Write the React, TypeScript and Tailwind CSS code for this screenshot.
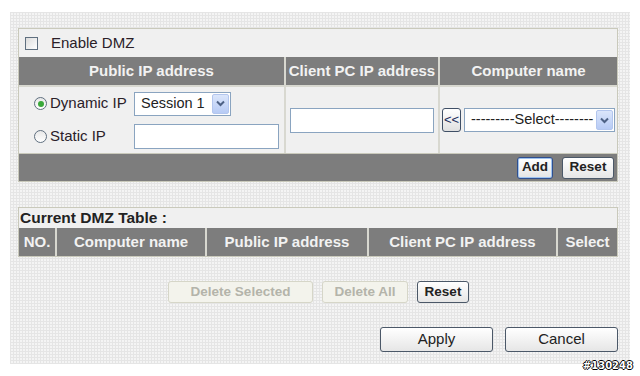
import React from "react"

const font = { fontFamily: '"Liberation Sans", Arial, sans-serif' }

function Radio({ checked }: { checked?: boolean }) {
  return (
    <span className="w-[13px] h-[13px] rounded-full border border-[#5f6f7f] bg-gradient-to-b from-[#e8e8e8] to-white flex items-center justify-center shrink-0">
      {checked && <span className="w-[6px] h-[6px] rounded-full bg-[#3aa83a]" />}
    </span>
  )
}

function Select({ label, width }: { label: string; width: string }) {
  return (
    <div className={`${width} h-[24px] border border-[#8aa4c0] bg-white flex items-center justify-between pl-[6px] pr-[1px]`}>
      <span className="text-[14.5px] text-[#222] whitespace-nowrap">{label}</span>
      <span className="w-[17px] h-[20px] rounded-[2px] bg-gradient-to-b from-[#dbe6fb] to-[#b7cbf5] border border-[#b3c6ee] flex items-center justify-center">
        <svg width="9" height="7" viewBox="0 0 9 7">
          <path d="M1 1.5 L4.5 5 L8 1.5" stroke="#4d6185" strokeWidth="2" fill="none" />
        </svg>
      </span>
    </div>
  )
}

function Btn({ children, w, h = "h-[22px]", bold = true, disabled, focus }: { children: React.ReactNode; w: string; h?: string; bold?: boolean; disabled?: boolean; focus?: boolean }) {
  const base = disabled
    ? "border-[#d6d6c8] text-[#b4b4aa] bg-[#f3f3ec]"
    : focus
      ? "border-[#2f4f8f] text-[#222] bg-gradient-to-b from-white to-[#e4e4e4] shadow-[inset_0_0_0_1px_#9ec3f0]"
      : "border-[#4b5868] text-[#222] bg-gradient-to-b from-white to-[#e6e6e6]"
  return (
    <div className={`${w} ${h} border rounded-[3px] flex items-center justify-center ${bold ? "font-bold text-[13.5px]" : "text-[15px]"} ${base}`}>
      {children}
    </div>
  )
}

export default function App() {
  return (
    <div className="w-[640px] h-[376px] bg-white relative overflow-hidden pl-[10px] pt-[12px]" style={font}>
      <div className="w-[620px] h-[352px] bg-[#f4f4f4] bg-[image:linear-gradient(#e5e5e5_1px,transparent_1px),linear-gradient(90deg,#e5e5e5_1px,transparent_1px)] bg-[size:3px_3px] px-[8px] pt-[16px]">
        {/* DMZ settings */}
        <div className="w-[600px] border border-[#c9c9bb] bg-[#f0f0f0]">
          <div className="h-[28px] flex items-center gap-[13px] pl-[6px]">
            <span className="w-[13px] h-[13px] border border-[#5f6f7f] bg-gradient-to-br from-[#dcdcdc] to-white" />
            <span className="text-[15px] text-[#2a2028]">Enable DMZ</span>
          </div>
          <div className="grid grid-cols-[265px_154px_179px] h-[28px] bg-[#7d7d7d] text-[#f2f2f2] font-bold text-[15px]">
            <div className="flex items-center justify-center">Public IP address</div>
            <div className="flex items-center justify-center border-l-2 border-[#d8d8d0] whitespace-nowrap">Client PC IP address</div>
            <div className="flex items-center justify-center border-l-2 border-[#d8d8d0]">Computer name</div>
          </div>
          <div className="grid grid-cols-[265px_154px_179px] h-[68px] border-t-2 border-[#d8d8d0]">
            <div className="flex flex-col justify-center gap-[8px] pl-[15px] pr-[4px]">
              <div className="flex items-center">
                <Radio checked />
                <span className="ml-[3px] w-[84px] text-[15px] text-[#2a2028]">Dynamic IP</span>
                <Select label="Session 1" width="w-[97px]" />
              </div>
              <div className="flex items-center">
                <Radio />
                <span className="ml-[3px] w-[84px] text-[15px] text-[#2a2028]">Static IP</span>
                <div className="w-[145px] h-[25px] border border-[#8aa4c0] bg-white" />
              </div>
            </div>
            <div className="flex items-center justify-center border-l-2 border-[#d8d8d0]">
              <div className="w-[144px] h-[25px] border border-[#8aa4c0] bg-white" />
            </div>
            <div className="flex items-center gap-[3px] pl-[2px] border-l-2 border-[#d8d8d0]">
              <div className="w-[19px] h-[24px] border border-[#3f4f66] rounded-[3px] bg-gradient-to-b from-white to-[#e0e0e0] flex items-center justify-center text-[13px] text-[#1a2a5a]">&lt;&lt;</div>
              <Select label="---------Select--------" width="w-[151px]" />
            </div>
          </div>
          <div className="h-[28px] bg-[#7d7d7d] flex items-center justify-end gap-[9px] pr-[3px] border-t border-[#c9c9bb]">
            <Btn w="w-[36px]" focus>Add</Btn>
            <Btn w="w-[52px]">Reset</Btn>
          </div>
        </div>

        {/* Current DMZ Table */}
        <div className="w-[600px] mt-[25px] border border-[#c9c9bb] bg-[#f0f0f0]">
          <div className="h-[20px] flex items-center pl-[1px] text-[15.5px] font-bold text-[#222]">Current DMZ Table :</div>
          <div className="grid grid-cols-[36px_150px_162px_189px_61px] h-[28px] bg-[#7d7d7d] text-[#f2f2f2] font-bold text-[15px]">
            <div className="flex items-center justify-center">NO.</div>
            <div className="flex items-center justify-center border-l-2 border-[#d8d8d0]">Computer name</div>
            <div className="flex items-center justify-center border-l-2 border-[#d8d8d0]">Public IP address</div>
            <div className="flex items-center justify-center border-l-2 border-[#d8d8d0]">Client PC IP address</div>
            <div className="flex items-center justify-center border-l-2 border-[#d8d8d0]">Select</div>
          </div>
        </div>

        <div className="mt-[24px] flex items-center gap-[9px] pl-[150px]">
          <Btn w="w-[145px]" disabled>Delete Selected</Btn>
          <Btn w="w-[86px]" disabled>Delete All</Btn>
          <Btn w="w-[52px]">Reset</Btn>
        </div>

        <div className="mt-[24px] flex items-center justify-end gap-[12px] w-[600px]">
          <Btn w="w-[113px]" h="h-[25px]" bold={false}>Apply</Btn>
          <Btn w="w-[113px]" h="h-[25px]" bold={false}>Cancel</Btn>
        </div>
      </div>

      <span className="absolute right-[7px] bottom-[3px] text-[10px] font-bold text-white [text-shadow:1px_0_0_#000,-1px_0_0_#000,0_1px_0_#000,0_-1px_0_#000]" style={{ fontFamily: '"DejaVu Sans", sans-serif' }}>
        #130248
      </span>
    </div>
  )
}
